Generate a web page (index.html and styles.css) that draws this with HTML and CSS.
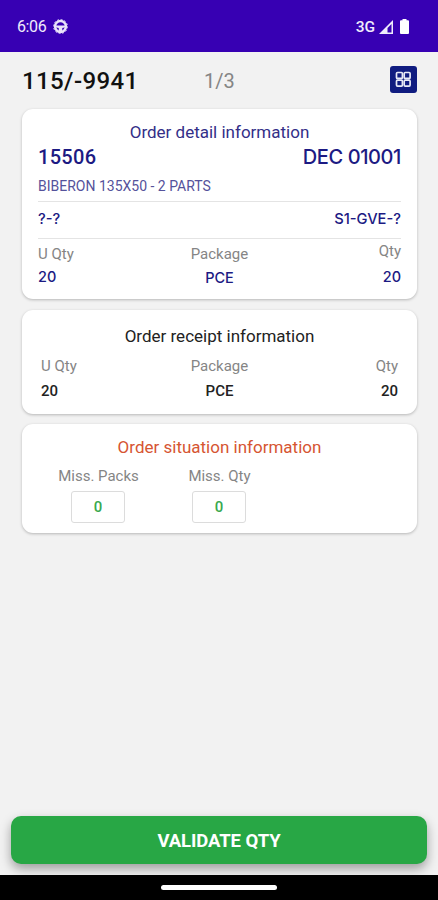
FILE: index.html
```html
<!DOCTYPE html>
<html lang="en">
<head>
<meta charset="utf-8">
<title>Order 115/-9941</title>
<link rel="stylesheet" href="styles.css">
</head>
<body>
<header class="status">
  <span class="clock">6:06</span>
  <svg class="wheel" viewBox="0 0 16 16"><circle cx="8" cy="8" r="5.800" fill="none" stroke="#e9e4fa" stroke-width="2.600"/><circle cx="8" cy="8" r="7.400" fill="none" stroke="#e9e4fa" stroke-width="1" stroke-dasharray="2 1.875"/><path d="M2.500 7h11v1.700l-3.600.8v4H6.100v-4l-3.600-.8z" fill="#e9e4fa"/></svg>
  <span class="network">3G</span>
  <svg class="signal" viewBox="0 0 14 14"><path d="M0 14 14 0v14z" fill="#efebfc"/><path d="M8.500 8 12.500 4v8.500h-4z" fill="#3700b3"/></svg>
  <svg class="battery" viewBox="0 0 9 15"><path d="M2.500 0h4v1.300H8A1 1 0 0 1 9 2.300V14a1 1 0 0 1-1 1H1a1 1 0 0 1-1-1V2.300a1 1 0 0 1 1-1h1.500z" fill="#fff"/></svg>
</header>
<main>
  <div class="heading">
    <h1>115/-9941</h1>
    <span class="page">1/3</span>
    <button class="grid-button" aria-label="Grid"><svg viewBox="0 0 27 27"><g fill="none" stroke="#e8eaf6" stroke-width="1.700"><rect x="6.500" y="6.500" width="5.900" height="5.900" rx="1"/><rect x="14.200" y="6.500" width="5.900" height="5.900" rx="1"/><rect x="6.500" y="14.200" width="5.900" height="5.900" rx="1"/><rect x="14.200" y="14.200" width="5.900" height="5.900" rx="1"/></g></svg></button>
  </div>

  <section class="card detail">
    <h2>Order detail information</h2>
    <div class="row codes"><span class="order">15506</span><span class="dec geo">DEC 01001</span></div>
    <p class="product">BIBERON 135X50 - 2 PARTS</p>
    <div class="row places geo"><span class="from">?-?</span><span class="to">S1-GVE-?</span></div>
    <div class="cols labels"><span>U Qty</span><span>Package</span><span class="raised">Qty</span></div>
    <div class="cols values geo"><span>20</span><span class="package">PCE</span><span>20</span></div>
  </section>

  <section class="card receipt">
    <h2>Order receipt information</h2>
    <div class="cols labels"><span>U Qty</span><span>Package</span><span>Qty</span></div>
    <div class="cols values"><span>20</span><span>PCE</span><span>20</span></div>
  </section>

  <section class="card situation">
    <h2>Order situation information</h2>
    <div class="missing">
      <label>Miss. Packs<span class="field">0</span></label>
      <label>Miss. Qty<span class="field">0</span></label>
    </div>
  </section>

  <button class="validate">VALIDATE QTY</button>
</main>
<footer class="nav"><span class="handle"></span></footer>
</body>
</html>
```
FILE: styles.css
```css
* { box-sizing: border-box; }
body {
  margin: 0;
  height: 900px;
  display: flex;
  flex-direction: column;
  overflow: hidden;
  background: #f2f2f2;
  font-family: Roboto, "Liberation Sans", sans-serif;
}
h1, h2, p { margin: 0; font-weight: 400; }
button { border: 0; padding: 0; font-family: inherit; }
svg { display: block; }

.status {
  height: 52px;
  flex: none;
  display: flex;
  align-items: center;
  padding: 1px 29px 0 17px;
  background: #3700b3;
  color: #efebfc;
}
.clock { font-size: 16px; width: 36px; letter-spacing: -0.4px; }
.wheel { width: 15px; height: 15px; }
.network { margin-left: auto; font-size: 15.5px; font-weight: 500; }
.signal { width: 14px; height: 14px; margin: 0 7px 0 4px; }
.battery { width: 9px; height: 15px; }

main {
  flex: 1;
  min-height: 0;
  display: flex;
  flex-direction: column;
  padding: 0 21px 11px 22px;
}
.heading {
  height: 57px;
  flex: none;
  display: flex;
  align-items: center;
}
h1 { width: 182px; font-size: 24px; font-weight: 500; letter-spacing: 0.4px; color: #111; }
.page { font-size: 20px; color: #858585; }
.grid-button { width: 27px; height: 27px; margin: -2px 0 0 auto; border-radius: 3px; background: #101c80; }

.card {
  flex: none;
  border-radius: 11px;
  background: #fff;
  box-shadow: 0 1px 3px rgba(0, 0, 0, 0.25);
}
h2 { height: 24px; line-height: 24px; text-align: center; font-size: 17px; }
.row { display: flex; justify-content: space-between; }
.cols { display: grid; grid-template-columns: 1fr 1fr 1fr; }
.cols > :nth-child(2) { text-align: center; }
.cols > :nth-child(3) { text-align: right; }
.geo { font-family: Inter, "Liberation Sans", sans-serif; }
.labels { color: #858585; font-size: 15px; height: 24px; line-height: 24px; }
.values { font-size: 15px; font-weight: 500; height: 24px; line-height: 24px; }

.detail { height: 190px; padding: 11px 16px 0; color: #1c1a83; }
.detail h2 { color: #332f88; }
.codes { height: 26px; line-height: 27px; font-size: 20px; font-weight: 500; }
.order { letter-spacing: 0.3px; }
.dec { font-weight: 550; letter-spacing: -0.4px; }
.product { height: 32px; line-height: 33px; border-bottom: 1px solid #e4e4e4; font-size: 14px; color: #55529b; }
.places { height: 37px; line-height: 34px; border-bottom: 1px solid #e4e4e4; font-size: 14.7px; font-weight: 500; }
.detail .labels { margin-top: 3px; }
.detail .values { font-size: 14.5px; line-height: 22px; }
.raised { margin-top: -3px; }
.package { padding-top: 1px; }

.receipt { height: 104px; margin-top: 11px; padding: 14px 19px 0; color: #222; }
.receipt .labels { margin-top: 6px; }
.receipt .values { margin-top: 1px; }

.situation { height: 109px; margin-top: 10px; padding: 11px 16px 0; }
.situation h2 { color: #d65532; }
.missing { display: grid; grid-template-columns: repeat(3, 121px); margin-top: 5px; }
.missing label { display: flex; flex-direction: column; align-items: center; font-size: 15px; line-height: 24px; color: #858585; }
.field {
  width: 54px;
  height: 32px;
  margin: 3px 1px 0 0;
  border: 1px solid #dcdcdc;
  border-radius: 3px;
  text-align: center;
  line-height: 31px;
  font-weight: 500;
  color: #38a94e;
}

.validate {
  height: 48px;
  flex: none;
  margin: auto -10px 0 -11px;
  padding-top: 2px;
  border-radius: 10px;
  background: #28a745;
  color: #fff;
  font-size: 18.5px;
  font-weight: 700;
  letter-spacing: -0.1px;
  box-shadow: 0 5px 11px rgba(0, 0, 0, 0.35);
}
.nav {
  height: 25px;
  flex: none;
  display: flex;
  justify-content: center;
  align-items: center;
  background: #000;
  z-index: 1;
}
.handle { width: 116px; height: 5px; border-radius: 3px; background: #fff; }
```
